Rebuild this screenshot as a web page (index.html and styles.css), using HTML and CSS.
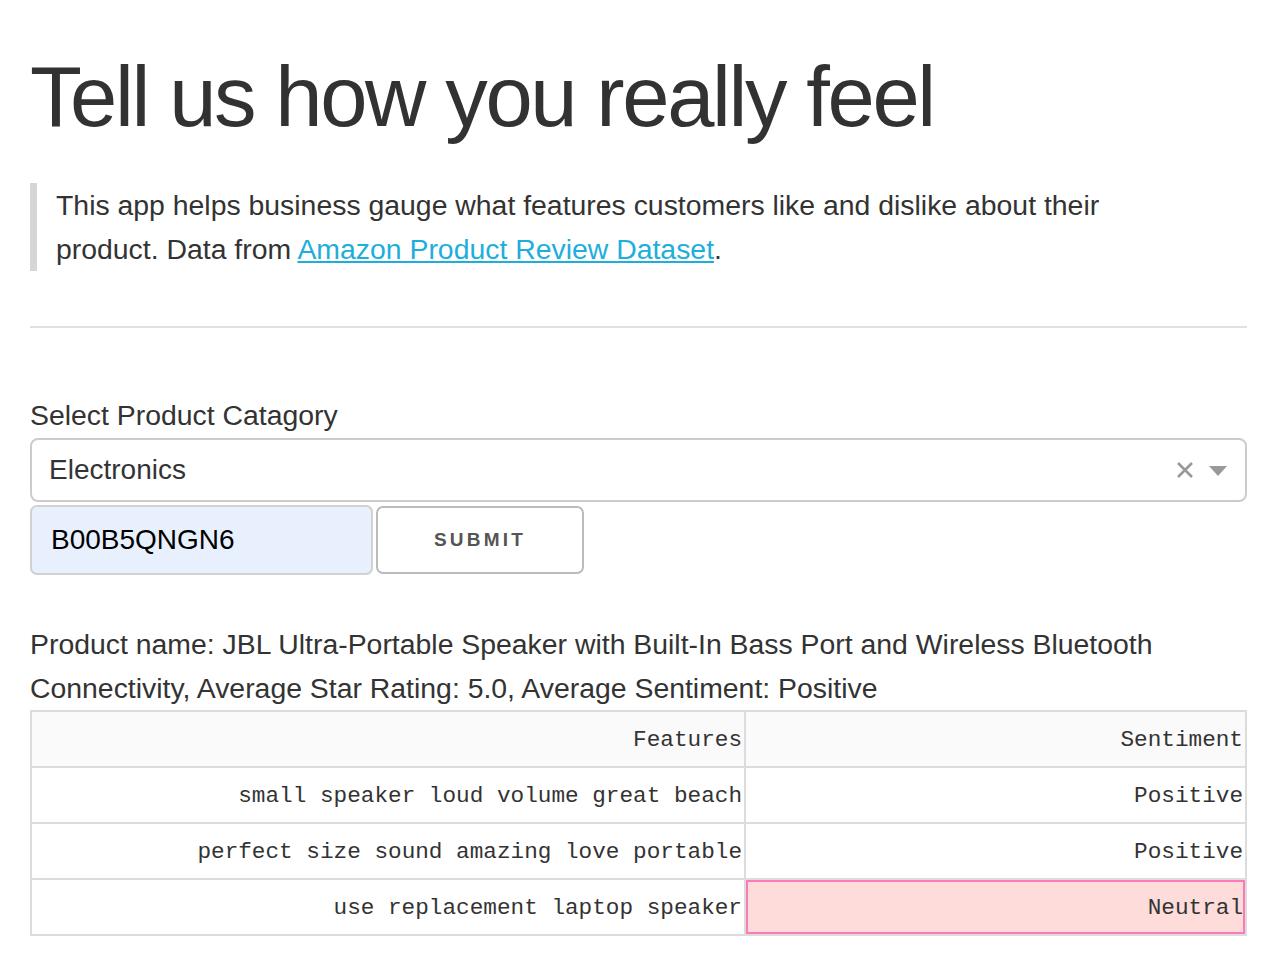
FILE: index.html
```html
<!DOCTYPE html>
<html>
<head>
<meta charset="utf-8">
<link rel="stylesheet" href="styles.css">
</head>
<body>
<div class="container">
  <h1 class="title">Tell us how you really feel</h1>
  <blockquote class="intro">This app helps business gauge what features customers like and dislike about their product. Data from <a href="#">Amazon Product Review Dataset</a>.</blockquote>
  <hr class="rule">
  <label class="label">Select Product Catagory</label>
  <div class="select">
    <span class="select-value">Electronics</span>
    <span class="select-icons">
      <svg class="clear" width="18" height="18" viewBox="0 0 18 18"><path d="M2 2 L16 16 M16 2 L2 16" stroke="#999" stroke-width="2.6" fill="none"/></svg>
      <svg class="arrow" width="18" height="10" viewBox="0 0 18 10"><path d="M0 0 L18 0 L9 10 Z" fill="#999"/></svg>
    </span>
  </div>
  <div class="form-row">
    <input class="asin" type="text" value="B00B5QNGN6">
    <button class="submit">SUBMIT</button>
  </div>
  <p class="product">Product name: JBL Ultra-Portable Speaker with Built-In Bass Port and Wireless Bluetooth Connectivity, Average Star Rating: 5.0, Average Sentiment: Positive</p>
  <table class="results">
    <thead>
      <tr><th class="col-feat">Features</th><th>Sentiment</th></tr>
    </thead>
    <tbody>
      <tr><td>small speaker loud volume great beach</td><td>Positive</td></tr>
      <tr><td>perfect size sound amazing love portable</td><td>Positive</td></tr>
      <tr><td>use replacement laptop speaker</td><td class="active">Neutral</td></tr>
    </tbody>
  </table>
</div>
</body>
</html>
```

FILE: styles.css
```css
html, body {
  margin: 0;
  padding: 0;
  background: #fff;
}
body {
  font-family: "Liberation Sans", Arial, Helvetica, sans-serif;
  color: #333;
  font-size: 28.4px;
  line-height: 44px;
}
.container {
  padding: 0 25px 40px 30px;
}
.title {
  margin: 46px 0 0 0;
  font-size: 85px;
  line-height: 102px;
  font-weight: 400;
  letter-spacing: -2.4px;
  color: #323232;
}
.intro {
  margin: 35px 0 0 0;
  border-left: 7px solid #d6d6d6;
  padding: 0 0 0 19px;
  max-width: 1110px;
  font-size: 28.4px;
  color: #333;
}
.intro a {
  color: #1eaedb;
  text-decoration: underline;
}
.rule {
  margin: 55px 0 0 0;
  border: 0;
  border-top: 2px solid #e1e1e1;
  height: 0;
}
.label {
  display: block;
  margin-top: 65px;
  color: #333;
}
.select {
  margin-top: 1px;
  height: 60px;
  border: 2px solid #cccccc;
  border-radius: 8px;
  display: flex;
  align-items: center;
  justify-content: space-between;
  padding: 0 18px 0 17px;
}
.select-value {
  color: #333;
  font-size: 28px;
}
.select-icons {
  display: flex;
  align-items: center;
  gap: 15px;
}
.clear {
  display: block;
}
.arrow {
  display: block;
  margin-top: 2px;
}
.form-row {
  display: flex;
  align-items: center;
  gap: 3px;
  margin-top: 3px;
}
.asin {
  box-sizing: border-box;
  width: 343px;
  height: 70px;
  background: #e8f0fe;
  border: 2px solid #d1d1d1;
  border-radius: 7px;
  padding: 0 0 0 19px;
  font-family: "Liberation Sans", Arial, sans-serif;
  font-size: 28px;
  color: #000;
  outline: none;
}
.submit {
  box-sizing: border-box;
  width: 208px;
  height: 68px;
  background: #fff;
  border: 2px solid #bbbbbb;
  border-radius: 7px;
  font-family: "Liberation Sans", Arial, sans-serif;
  font-size: 19px;
  font-weight: 700;
  letter-spacing: 3.2px;
  color: #555;
  padding: 0;
  text-align: center;
}
.product {
  margin: 47px 0 0 0;
  color: #333;
}
.results {
  width: 100%;
  border-collapse: collapse;
  font-family: "Liberation Mono", "Courier New", monospace;
  font-size: 22.7px;
  color: #333;
}
.results th,
.results td {
  border: 2px solid #dcdcdc;
  height: 52px;
  padding: 2px 2px 0 0;
  text-align: right;
  font-weight: 400;
  vertical-align: middle;
}
.results th {
  background: #fafafa;
}
.results .col-feat {
  width: 710px;
}
.results td.active {
  background: #fddcd9;
  box-shadow: inset 0 0 0 2px #ff78b8;
}
```
